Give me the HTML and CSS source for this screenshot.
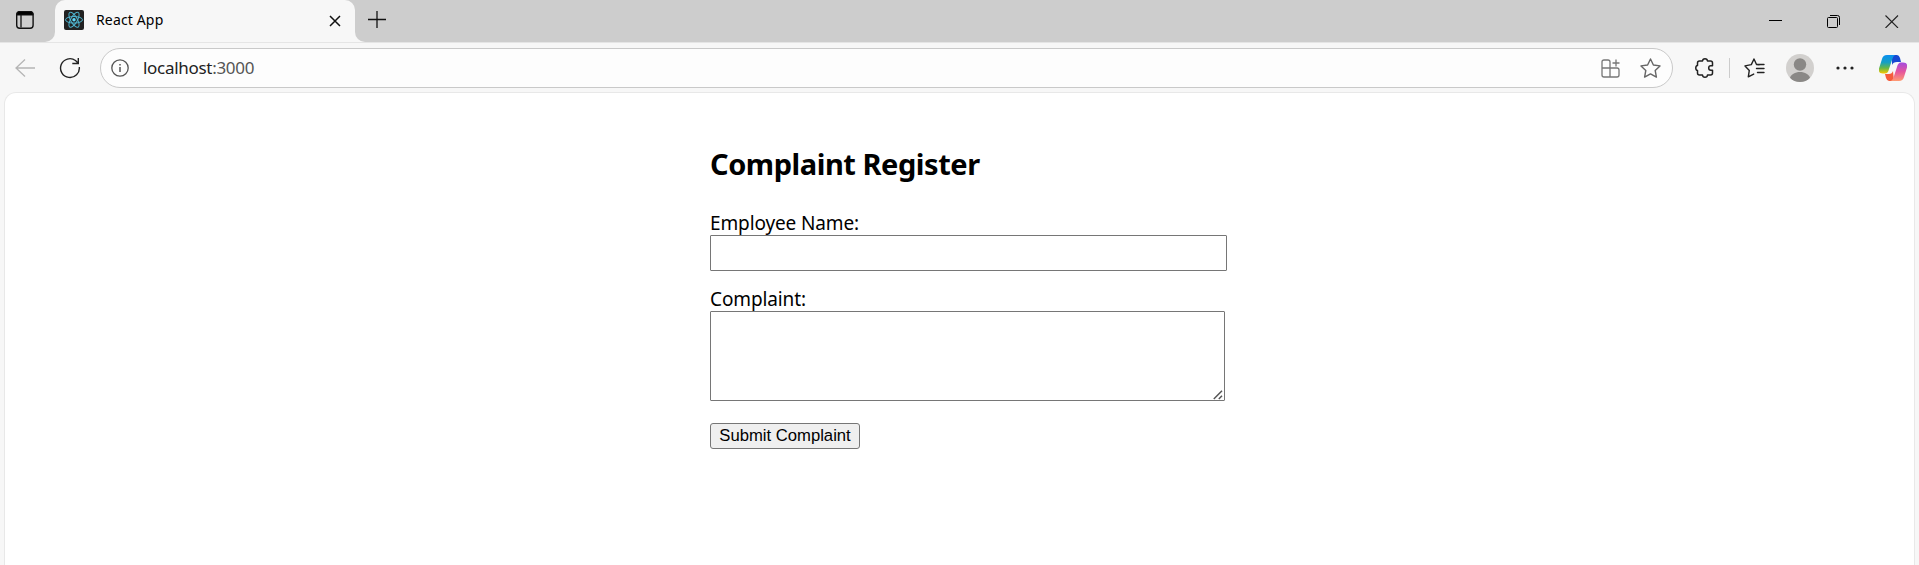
FILE: index.html
```html
<!DOCTYPE html>
<html lang="en">
<head>
<meta charset="utf-8">
<title>React App</title>
<link rel="stylesheet" href="styles.css">
</head>
<body>
<header class="tabbar">
  <div class="tab-actions">
    <svg class="icon-workspace" width="20" height="20" viewBox="0 0 20 20" fill="none" stroke="#111"><rect x="1.700" y="1.800" width="16.400" height="16.400" rx="3" stroke-width="1.400"/><path d="M2 5V4q0-2.500 2.500-2.500h11Q18 1.500 18 4v1z" fill="#000" stroke-width="1"/><path d="M6 5v12.500" stroke-width="1.300"/></svg>
  </div>
  <div class="tab">
    <svg class="favicon" width="20" height="20" viewBox="0 0 20 20"><rect width="20" height="20" rx="2" fill="#222"/><g fill="none" stroke="#4fb5d0" stroke-width="1"><ellipse cx="10" cy="9.800" rx="8.500" ry="3.300"/><ellipse cx="10" cy="9.800" rx="8.500" ry="3.300" transform="rotate(60 10 9.800)"/><ellipse cx="10" cy="9.800" rx="8.500" ry="3.300" transform="rotate(120 10 9.800)"/></g><circle cx="10" cy="9.800" r="1.700" fill="#61dafb"/></svg>
    <span class="tab-title">React App</span>
    <svg class="tab-close" width="12" height="12" viewBox="0 0 12 12" stroke="#111" stroke-width="1.500"><path d="M1 1l10 10M11 1L1 11"/></svg>
  </div>
  <div class="tab-rest">
    <svg class="new-tab" width="18" height="18" viewBox="0 0 18 18" stroke="#111" stroke-width="1.300"><path d="M0 9.500h18M9 1v17"/></svg>
    <div class="window-controls">
      <svg width="14" height="14" viewBox="0 0 14 14"><path d="M0 6.500h13" stroke="#000"/></svg>
      <svg width="14" height="14" viewBox="0 0 14 14" fill="none" stroke="#000"><rect x=".5" y="3.500" width="10" height="10" rx="1"/><path d="M3 1.500h7.500q2 0 2 2V11"/></svg>
      <svg width="14" height="14" viewBox="0 0 14 14" stroke="#222" stroke-width="1.100"><path d="M.5 1.500l12.500 12.500M13 1.500L.5 14"/></svg>
    </div>
  </div>
</header>
<nav class="toolbar">
  <svg class="back" width="20" height="18" viewBox="0 0 20 18" fill="none" stroke="#b5b5b5" stroke-width="1.300"><path d="M20 9H1M10 .5L1 9l9 8.500"/></svg>
  <svg class="reload" width="22" height="22" viewBox="0 0 22 22" fill="none" stroke="#222" stroke-width="1.400"><path d="M20.300 10A9.400 9.400 0 1 1 16.500 3.500L19 6M19.300 1v5.500h-6"/></svg>
  <div class="address">
    <svg class="info" width="18" height="18" viewBox="0 0 18 18" fill="none" stroke="#555" stroke-width="1.300"><circle cx="9" cy="9" r="8.200"/><path d="M9 8v5M9 5v1.500" stroke-width="1.500"/></svg>
    <span class="url"><b>localhost</b>:3000</span>
    <svg class="apps" width="19" height="20" viewBox="0 0 19 20" fill="none" stroke="#777" stroke-width="1.300"><path d="M9 10V4q0-2-2-2H3Q1 2 1 4v13q0 2 2 2h13q2 0 2-2v-5q0-2-2-2H1M9 10v9M11.500 5h7M15 1.500v7"/></svg>
    <svg class="star" width="21" height="20" viewBox="0 0 21 20" fill="none" stroke="#666" stroke-width="1.400" stroke-linejoin="round"><path d="M10.500 1l2.900 6 6.600.9-4.800 4.600 1.200 6.600-5.900-3.200-5.900 3.200 1.200-6.600L1 7.900 7.600 7z"/></svg>
  </div>
  <svg class="extensions" width="20" height="20" viewBox="0 0 20 20" fill="none" stroke="#222" stroke-width="1.500" stroke-linejoin="round"><path d="M4.500 3h3C7.700 0 12.300 0 12.500 3h3Q17.500 3 17.500 5v2.800h-1.700c-2.800 0-2.800 4.400 0 4.400h1.700V15q0 2-2 2h-3c-.2 3-4.800 3-5 0h-3q-2 0-2-2v-2.500c-2.300-.2-2.300-4.800 0-5V5q0-2 2-2z"/></svg>
  <i class="divider"></i>
  <svg class="favorites" width="21" height="20" viewBox="0 0 21 20" fill="none" stroke="#222" stroke-width="1.400" stroke-linejoin="round" stroke-linecap="round"><path d="M15 6.800L12.500 6.500 10 1 7.300 6.600 1 7.900l4.300 4.500-1 6.500 5.400-2.800M12.500 10.500H20M12.500 6.500H20M13.500 14.500H20"/></svg>
  <svg class="avatar" width="28" height="28" viewBox="0 0 28 28"><circle cx="14" cy="14" r="14" fill="#d2d0ce"/><circle cx="14" cy="10.500" r="6.200" fill="#8a8886"/><path d="M4 23.700C5 20.500 9 18 14 18s9 2.500 10 5.700Q20 28 14 28T4 23.700z" fill="#8a8886"/></svg>
  <svg class="more" width="18" height="4" viewBox="0 0 18 4" fill="#222"><circle cx="2" cy="2" r="1.600"/><circle cx="9" cy="2" r="1.600"/><circle cx="16" cy="2" r="1.600"/></svg>
  <svg class="copilot" width="28" height="26" viewBox="0 0 28 26">
    <defs>
      <linearGradient id="cool" x1="0" y1="0" x2="0" y2="1"><stop offset="0" stop-color="#0a8ff0"/><stop offset=".4" stop-color="#159fc4"/><stop offset=".7" stop-color="#65b747"/><stop offset="1" stop-color="#fac800"/></linearGradient>
      <linearGradient id="warm" x1="0" y1="0" x2="0" y2="1"><stop offset="0" stop-color="#a34be0"/><stop offset=".5" stop-color="#e5559d"/><stop offset="1" stop-color="#ff9b72"/></linearGradient>
    </defs>
    <path d="M13 0h5q2 0 3 3l1 4h-4q-4 0-5 3z" fill="#1749d2"/>
    <path d="M15 26h-5q-2 0-3-3l-1-4h4q3 0 4-3z" fill="#f65c3c"/>
    <path d="M8 0h8q-2 1-3 5l-3 9q-1 4.500-4 4.500H4q-5 0-4-5L3 4q1-4 5-4z" fill="url(#cool)"/>
    <path d="M20 26h-8q2-1 3-5l3-9q1-4.500 4-4.500h2q5 0 4 5L25 22q-1 4-5 4z" fill="url(#warm)"/>
  </svg>
</nav>
<main class="page">
  <form class="complaint-form">
    <h2>Complaint Register</h2>
    <label class="name-label" for="employee">Employee Name:</label>
    <input id="employee" type="text">
    <label class="complaint-label" for="complaint">Complaint:</label>
    <div class="textarea-wrap">
      <textarea id="complaint"></textarea>
      <svg class="grip" width="10" height="10" viewBox="0 0 10 10" stroke="#555" stroke-width="1.500"><path d="M.8 9L9 .8M5.800 9L9 5.800"/></svg>
    </div>
    <button type="button">Submit Complaint</button>
  </form>
</main>
</body>
</html>
```
FILE: styles.css
```css
* { box-sizing: border-box; }
body {
  margin: 0;
  height: 565px;
  overflow: hidden;
  display: flex;
  flex-direction: column;
  background: #f7f7f7;
  color: #000;
  font-family: "Noto Sans", "Open Sans", sans-serif;
}
svg { display: block; flex: none; }
.tabbar { display: flex; height: 42px; background: #f7f7f7; flex: none; }
.tab-actions {
  width: 55px;
  padding: 10px 0 0 15px;
  background: #cdcdcd;
  border-bottom-right-radius: 10px;
}
.tab {
  width: 300px;
  display: flex;
  align-items: flex-start;
  padding: 10px 14px 0 9px;
  background: linear-gradient(#cdcdcd, #cdcdcd) 0 0 / 100% 10px no-repeat;
  position: relative;
  z-index: 0;
}
.tab::before {
  content: "";
  position: absolute;
  inset: 0;
  z-index: -1;
  border-radius: 10px 10px 0 0;
  background: #f7f7f7;
}
.tab-title {
  margin-left: 12px;
  font-size: 14px;
  line-height: 20px;
  letter-spacing: 0.15px;
  flex: 1;
  white-space: nowrap;
}
.tab-close { margin-top: 5px; }
.tab-rest {
  flex: 1;
  display: flex;
  justify-content: space-between;
  background: #cdcdcd;
  border-bottom-left-radius: 10px;
}
.new-tab { margin: 10px 0 0 13px; }
.window-controls { display: flex; gap: 44px; padding: 14px 20px 0 0; }
.toolbar {
  display: flex;
  align-items: center;
  height: 50px;
  padding: 0 12px 0 15px;
  border-top: 1px solid #e5e5e5;
  flex: none;
}
.reload { margin-left: 24px; }
.address {
  width: 1573px;
  height: 40px;
  margin-left: 19px;
  display: flex;
  align-items: center;
  padding: 0 11px 0 10px;
  border: 1px solid #c9c9c9;
  border-radius: 20px;
  background: #fdfdfd;
}
.url {
  margin-left: 14px;
  flex: 1;
  font-size: 17px;
  line-height: 24px;
  letter-spacing: -0.3px;
  color: #555;
}
.url b { font-weight: 400; color: #222; }
.star { margin-left: 20px; }
.extensions { margin-left: 22px; }
.divider { width: 1px; height: 20px; margin-left: 14px; background: #ccc; }
.favorites { margin-left: 14px; }
.avatar { margin-left: 21px; }
.more { margin-left: 22px; }
.copilot { margin-left: auto; }
.page {
  flex: 1;
  margin: 0 4px;
  border: 1px solid #e8e8e8;
  border-bottom: 0;
  border-radius: 12px 12px 0 0;
  background: #fff;
}
.complaint-form {
  width: 520px;
  margin: 51px 0 0 705px;
  display: flex;
  flex-direction: column;
  align-items: flex-start;
}
h2 {
  margin: 0;
  font-size: 29px;
  line-height: 40px;
  letter-spacing: -0.45px;
  white-space: nowrap;
}
label {
  font-size: 19px;
  line-height: 27px;
  height: 25px;
  letter-spacing: -0.12px;
  white-space: nowrap;
}
.name-label { margin-top: 26px; }
.complaint-label { margin-top: 15px; }
input, textarea {
  display: block;
  margin: 0;
  border: 1px solid #767676;
  border-radius: 1px;
  background: #fff;
}
input { width: 517px; height: 36px; }
textarea { width: 515px; height: 90px; resize: none; }
.textarea-wrap { position: relative; }
.grip { position: absolute; right: 2px; bottom: 1px; }
button {
  width: 150px;
  height: 26px;
  margin-top: 22px;
  padding: 0;
  border: 1px solid #767676;
  border-radius: 3px;
  background: #efefef;
  color: #000;
  font: 16.67px/22px "Liberation Sans", Arial, sans-serif;
  white-space: nowrap;
}
```
